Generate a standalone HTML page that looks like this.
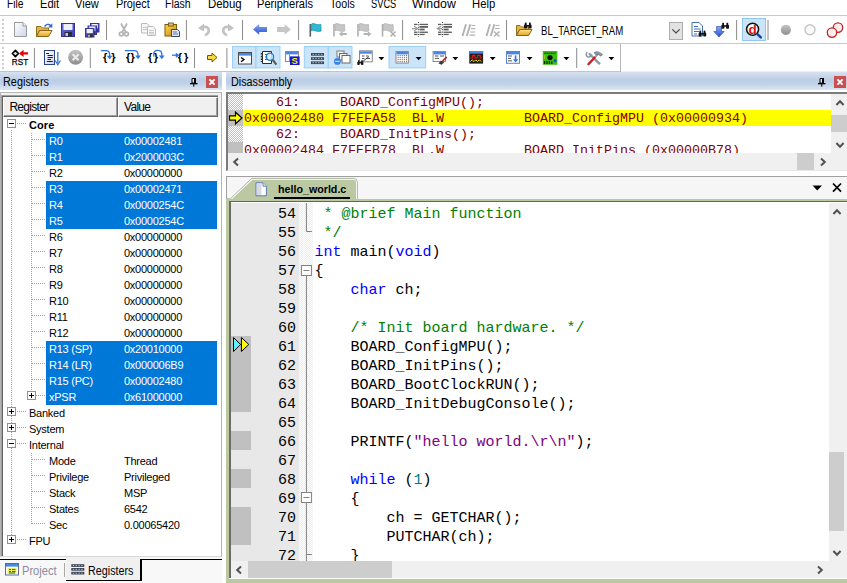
<!DOCTYPE html><html><head><meta charset="utf-8"><title>uVision</title><style>
*{box-sizing:border-box;margin:0;padding:0}
html,body{width:847px;height:583px;overflow:hidden;background:#f0f0f0}
body{position:relative;font-family:"Liberation Sans",sans-serif;font-size:12px;color:#000}
.a{position:absolute}
.t{position:absolute;white-space:pre;line-height:1}
#menubar{left:0;top:0;width:847px;height:15px;background:#fff}
.mi{font-size:12.5px;top:-3px;}
#tb1{left:0;top:16px;width:847px;height:27px;background:#fff}
#tb2{left:0;top:44px;width:847px;height:27px;background:#fff}
.hl{background:#c8c8c8;height:1px;left:0;width:847px}
.grip{width:3px;background:repeating-linear-gradient(#b4b4b4 0 1px,transparent 1px 3px);left:2px}
.sep{width:1px;background:#8d8d8d;height:20px}
.phead{height:18px;top:72px;background:linear-gradient(#d6e1f0 0%,#bccde4 45%,#c4d4e8 70%,#dbe6f3 100%)}
.phead .t{font-size:12px;top:3px;left:3px}
.xbtn{width:12px;height:12px;background:#c75050;top:76px}
.mono{font-family:"Liberation Mono",monospace}
.row{position:absolute;left:3px;width:214px;height:16px;font-size:11px;letter-spacing:-0.25px}
.row .t{top:2.6px}
.sel{position:absolute;left:43px;top:0;width:171px;height:16px;background:#0078d7}
.row.s .t{color:#fff}
.dot-h{position:absolute;height:1px;background:repeating-linear-gradient(90deg,#a0a0a0 0 1px,transparent 1px 2px)}
.dot-v{position:absolute;width:1px;background:repeating-linear-gradient(#a0a0a0 0 1px,transparent 1px 2px)}
.box{position:absolute;width:9px;height:9px;border:1px solid #919191;background:#fff}
.box i{position:absolute;left:1px;top:3px;width:5px;height:1px;background:#000}
.box b{position:absolute;left:3px;top:1px;width:1px;height:5px;background:#000}
.dis{font-size:12px;color:#800000;transform-origin:0 0;transform:scaleX(1.1111)}
.code{font-size:15px;}
.ln{font-size:15px;color:#000}
.cm{color:#008000}.kw{color:#0000ff}.st{color:#800080}.nm{color:#008080}
.chk{background-image:conic-gradient(#c0c0c0 25%,#fff 0 50%,#c0c0c0 0 75%,#fff 0);background-size:2px 2px}
.sb{background:#f0f0f0}
.thumb{background:#cdcdcd}
.arr{font-family:"DejaVu Sans",sans-serif;color:#606060}
</style></head><body>
<div id="menubar" class="a">
<span class="t" style="left:7.3px;top:-2.3px;font-size:12px;transform-origin:0 0;transform:scaleX(0.8530);">File</span>
<span class="t" style="left:40.3px;top:-2.3px;font-size:12px;transform-origin:0 0;transform:scaleX(0.9281);">Edit</span>
<span class="t" style="left:75.4px;top:-2.3px;font-size:12px;transform-origin:0 0;transform:scaleX(0.9226);">View</span>
<span class="t" style="left:115.7px;top:-2.3px;font-size:12px;transform-origin:0 0;transform:scaleX(0.9020);">Project</span>
<span class="t" style="left:165.3px;top:-2.3px;font-size:12px;transform-origin:0 0;transform:scaleX(0.8758);">Flash</span>
<span class="t" style="left:207.6px;top:-2.3px;font-size:12px;transform-origin:0 0;transform:scaleX(0.9527);">Debug</span>
<span class="t" style="left:257px;top:-2.3px;font-size:12px;transform-origin:0 0;transform:scaleX(0.9225);">Peripherals</span>
<span class="t" style="left:329.5px;top:-2.3px;font-size:12px;transform-origin:0 0;transform:scaleX(0.8852);">Tools</span>
<span class="t" style="left:371px;top:-2.3px;font-size:12px;transform-origin:0 0;transform:scaleX(0.7740);">SVCS</span>
<span class="t" style="left:412px;top:-2.3px;font-size:12px;transform-origin:0 0;transform:scaleX(1.0261);">Window</span>
<span class="t" style="left:471.6px;top:-2.3px;font-size:12px;transform-origin:0 0;transform:scaleX(0.9397);">Help</span>
</div>
<div class="a hl" style="top:15px"></div>
<div id="tb1" class="a"><!--TB1--></div>
<div class="a hl" style="top:43px"></div>
<div id="tb2" class="a"><!--TB2--></div>
<div class="a hl" style="top:71px;background:#c4c4c4;width:621px"></div>
<div class="a" style="left:620px;top:44px;width:1px;height:28px;background:#b4b4b4"></div>
<svg class="a" style="left:0;top:16px" width="847" height="56" viewBox="0 16 847 56">
<defs>
<linearGradient id="gpage" x1="0" y1="0" x2="1" y2="1"><stop offset="0" stop-color="#ffffff"/><stop offset="1" stop-color="#cfd4ee"/></linearGradient>
<linearGradient id="gfold" x1="0" y1="0" x2="0" y2="1"><stop offset="0" stop-color="#ffe58a"/><stop offset="1" stop-color="#e3a428"/></linearGradient>
<linearGradient id="gblue" x1="0" y1="0" x2="0" y2="1"><stop offset="0" stop-color="#86a8f4"/><stop offset="1" stop-color="#2c50cc"/></linearGradient>
<linearGradient id="ggrey" x1="0" y1="0" x2="0" y2="1"><stop offset="0" stop-color="#c4c4c4"/><stop offset="1" stop-color="#8e8e8e"/></linearGradient>
<linearGradient id="gflop" x1="0" y1="0" x2="1" y2="1"><stop offset="0" stop-color="#6c6cd8"/><stop offset="1" stop-color="#4040a8"/></linearGradient>
<linearGradient id="gclip" x1="0" y1="0" x2="1" y2="1"><stop offset="0" stop-color="#ffd850"/><stop offset="1" stop-color="#c88c10"/></linearGradient>
</defs>
<rect x="2.2" y="19.2" width="1.6" height="1.6" fill="#b4b4b4"/>
<rect x="2.2" y="23.2" width="1.6" height="1.6" fill="#b4b4b4"/>
<rect x="2.2" y="27.2" width="1.6" height="1.6" fill="#b4b4b4"/>
<rect x="2.2" y="31.2" width="1.6" height="1.6" fill="#b4b4b4"/>
<rect x="2.2" y="35.2" width="1.6" height="1.6" fill="#b4b4b4"/>
<rect x="2.2" y="39.2" width="1.6" height="1.6" fill="#b4b4b4"/>
<rect x="2.2" y="47.2" width="1.6" height="1.6" fill="#b4b4b4"/>
<rect x="2.2" y="51.2" width="1.6" height="1.6" fill="#b4b4b4"/>
<rect x="2.2" y="55.2" width="1.6" height="1.6" fill="#b4b4b4"/>
<rect x="2.2" y="59.2" width="1.6" height="1.6" fill="#b4b4b4"/>
<rect x="2.2" y="63.2" width="1.6" height="1.6" fill="#b4b4b4"/>
<rect x="2.2" y="67.2" width="1.6" height="1.6" fill="#b4b4b4"/>
<rect x="106.0" y="20" width="1" height="20" fill="#8c8c8c"/>
<rect x="185.9" y="20" width="1" height="20" fill="#8c8c8c"/>
<rect x="242.0" y="20" width="1" height="20" fill="#8c8c8c"/>
<rect x="298.1" y="20" width="1" height="20" fill="#8c8c8c"/>
<rect x="402.1" y="20" width="1" height="20" fill="#8c8c8c"/>
<rect x="506.0" y="20" width="1" height="20" fill="#8c8c8c"/>
<rect x="736.1" y="20" width="1" height="20" fill="#8c8c8c"/>
<rect x="767.5" y="20" width="1" height="20" fill="#8c8c8c"/>
<rect x="33.9" y="48" width="1" height="20" fill="#8c8c8c"/>
<rect x="89.8" y="48" width="1" height="20" fill="#8c8c8c"/>
<rect x="194.0" y="48" width="1" height="20" fill="#8c8c8c"/>
<rect x="226.4" y="48" width="1" height="20" fill="#8c8c8c"/>
<rect x="576.2" y="48" width="1" height="20" fill="#8c8c8c"/>
<path d="M14.5 22.5H23L26.5 26V36.5H14.5Z" fill="url(#gpage)" stroke="#9a9a9a"/><path d="M23 22.5V26H26.5" fill="#f4f4fa" stroke="#9a9a9a"/>
<path d="M36.5 36.5V26.5H41L42.5 28H48.5V30.5H39.5L36.5 36.5Z" fill="#e6b347" stroke="#94701c"/><path d="M36.5 36.5L39.7 30.5H52L48.6 36.5Z" fill="url(#gfold)" stroke="#8a661a"/>
<path d="M44.5 26.5Q47.5 22.5 51 26" fill="none" stroke="#3566cc" stroke-width="1.5"/><path d="M52.3 23.2V27.6H48Z" fill="#3566cc"/>
<rect x="61.5" y="23.5" width="13" height="13" fill="url(#gflop)" stroke="#34349a"/>
<rect x="63.5" y="24" width="9.0" height="6.0" fill="#eef0fc"/>
<rect x="64.5" y="32.0" width="7.5" height="4.5" fill="#2c2c38"/>
<rect x="65.5" y="33.0" width="2.5" height="3.0" fill="#c8c8d4"/>
<rect x="90.5" y="23.5" width="8.5" height="8.5" fill="url(#gflop)" stroke="#34349a"/>
<rect x="91.7" y="24" width="6.1" height="4.1" fill="#eef0fc"/>
<rect x="92.4" y="29.1" width="5.1" height="3.1" fill="#2c2c38"/>
<rect x="93.1" y="29.8" width="1.7" height="2.0" fill="#c8c8d4"/>
<rect x="88.0" y="26.0" width="8.5" height="8.5" fill="url(#gflop)" stroke="#34349a"/>
<rect x="89.2" y="26.5" width="6.1" height="4.1" fill="#eef0fc"/>
<rect x="89.9" y="31.6" width="5.1" height="3.1" fill="#2c2c38"/>
<rect x="90.6" y="32.3" width="1.7" height="2.0" fill="#c8c8d4"/>
<rect x="85.5" y="28.5" width="8.5" height="8.5" fill="url(#gflop)" stroke="#34349a"/>
<rect x="86.7" y="29" width="6.1" height="4.1" fill="#eef0fc"/>
<rect x="87.4" y="34.1" width="5.1" height="3.1" fill="#2c2c38"/>
<rect x="88.1" y="34.8" width="1.7" height="2.0" fill="#c8c8d4"/>
<g stroke="#b4b4b4" fill="none" stroke-width="1.7"><path d="M121 23.5L126 32.5M127 23.5L122 32.5"/><circle cx="121.3" cy="34" r="1.9"/><circle cx="126.5" cy="34" r="1.9"/></g>
<g stroke="#bcbcbc" fill="#f6f6f6"><path d="M141.5 23.5H147L149.5 26V33H141.5Z"/><path d="M147.5 26.5H153L155.5 29V35.5H147.5Z"/></g><g stroke="#c8c8c8"><path d="M143 27.5H148M143 29.5H147M149 30.5H154M149 32.5H154M149 34H154" fill="none"/></g>
<rect x="165" y="24.5" width="11.5" height="11.5" fill="url(#gclip)" stroke="#7c5c0c"/><rect x="168.3" y="23" width="5" height="3" fill="#d8c070" stroke="#5c4c14" stroke-width=".8"/>
<path d="M171.5 29.5H177.5L179.5 31.5V36.5H171.5Z" fill="#dfe6f4" stroke="#34466a"/><path d="M173 32H177M173 34H178" stroke="#5a78aa" fill="none"/>
<g fill="none" stroke="#c2c2c2" stroke-width="2.6"><path d="M205 35.2C210.5 33 210 25.8 203 27"/><path d="M227 35.2C221.5 33 222 25.8 229 27"/></g>
<path d="M198 28.2L204 23.6V31.6Z" fill="#c2c2c2"/><path d="M234 28.2L228 23.6V31.6Z" fill="#c2c2c2"/>
<path d="M253 29.4L259.2 24V27H267V32H259.2V34.8Z" fill="url(#gblue)"/>
<path d="M290.8 29.4L284.6 24V27H277V32H284.6V34.8Z" fill="#c6c6c6"/>
<path d="M310.3 24V36.6" stroke="#5a5a5a" stroke-width="1.6"/>
<path d="M311.3 24.2C313.8 22.2 316.3 25.8 320.8 24.4L321.1 31C316.3 32.6 313.8 28.8 311.3 30.8Z" fill="#2fbad2" stroke="#1794ae" stroke-width=".8"/>
<path d="M334 24V36.6" stroke="#b0b0b0" stroke-width="1.6"/>
<path d="M335 24.2C337.5 22.2 340 25.8 344.5 24.4L344.8 31C340 32.6 337.5 28.8 335 30.8Z" fill="#c6c6c6" stroke="#b4b4b4" stroke-width=".8"/>
<path d="M358 24V36.6" stroke="#b0b0b0" stroke-width="1.6"/>
<path d="M359 24.2C361.5 22.2 364 25.8 368.5 24.4L368.8 31C364 32.6 361.5 28.8 359 30.8Z" fill="#c6c6c6" stroke="#b4b4b4" stroke-width=".8"/>
<path d="M382.5 24V36.6" stroke="#b0b0b0" stroke-width="1.6"/>
<path d="M383.5 24.2C386.0 22.2 388.5 25.8 393.0 24.4L393.3 31C388.5 32.6 386.0 28.8 383.5 30.8Z" fill="#c6c6c6" stroke="#b4b4b4" stroke-width=".8"/>
<path d="M339 34L342.5 31.2V33H346.8V35H342.5V36.8Z" fill="#b4b4b4"/>
<path d="M371.4 34L367.9 31.2V33H363.6V35H367.9V36.8Z" fill="#b4b4b4"/>
<path d="M390.5 31.5L395.5 36.5M395.5 31.5L390.5 36.5" stroke="#b0b0b0" stroke-width="1.5"/>
<g fill="#5e5e5e"><rect x="419.5" y="23.8" width="8.5" height="1.3"/><rect x="419.5" y="26" width="8.5" height="1.8"/><rect x="419.5" y="28.6" width="5.2" height="1.8"/><rect x="419.5" y="31.6" width="8.5" height="1.3"/><rect x="419.5" y="33.8" width="5.2" height="1.3"/>
<rect x="414" y="23.8" width="3.5" height="1.3"/><rect x="414" y="31.6" width="3.5" height="1.3"/><rect x="414" y="33.8" width="3.5" height="1.3"/></g>
<path d="M418.5 22V37" stroke="#4a4a4a" stroke-width="1" stroke-dasharray="1 1.4"/>
<path d="M414 26.2L417.8 28.6L414 31M412 28.6H417.5" stroke="#9a9a9a" fill="none" stroke-width="1.1"/>
<g fill="#5e5e5e"><rect x="443.5" y="23.8" width="8.5" height="1.3"/><rect x="443.5" y="26" width="8.5" height="1.8"/><rect x="443.5" y="28.6" width="5.2" height="1.8"/><rect x="443.5" y="31.6" width="8.5" height="1.3"/><rect x="443.5" y="33.8" width="5.2" height="1.3"/>
<rect x="438" y="23.8" width="3.5" height="1.3"/><rect x="438" y="31.6" width="3.5" height="1.3"/><rect x="438" y="33.8" width="3.5" height="1.3"/></g>
<path d="M442.5 22V37" stroke="#4a4a4a" stroke-width="1" stroke-dasharray="1 1.4"/>
<path d="M441 26.2L437.2 28.6L441 31M437.5 28.6H442" stroke="#9a9a9a" fill="none" stroke-width="1.1"/>
<g stroke="#b2b2b2" fill="none"><path d="M462.5 36L466 24.2M466.8 36L470.3 24.2" stroke-width="1.9"/>
<path d="M471.5 25.5H475.3M471 28.7H475.3M470.2 32H475.3M469.5 35.2H475.3" stroke-width="1.2"/></g>
<g stroke="#b2b2b2" fill="none"><path d="M486.5 36L490 24.2M490.8 36L494.3 24.2" stroke-width="1.9"/>
<path d="M495.5 25.5H499.5M495 28.5H499.5" stroke-width="1.2"/><path d="M494 31.5L499.5 36.5M499.5 31.5L494 36.5" stroke-width="1.6"/></g>
<path d="M516.5 35.5V25.5H520L521.5 27H528.5V29.5H519.5Z" fill="#e6b347" stroke="#94701c"/><path d="M516.5 35.5L519.7 29.5H532L528.6 35.5Z" fill="url(#gfold)" stroke="#8a661a"/>
<g fill="#141414"><rect x="524" y="24.6" width="3.0" height="4.0" rx=".8"/><rect x="528.6" y="24.6" width="3.0" height="4.0" rx=".8"/><rect x="524.8" y="22.6" width="1.8" height="3.0"/><rect x="529.0" y="22.6" width="1.8" height="3.0"/><rect x="526.5" y="25.0" width="2.6" height="1.6"/></g>
<rect x="669.5" y="22.5" width="13" height="17" fill="#e2e2e2" stroke="#adadad"/><path d="M672.3 29.3L676 33L679.7 29.3" fill="none" stroke="#444" stroke-width="1.2"/>
<path d="M692 22.5H699L702.5 26V36H692Z" fill="#fff" stroke="#4a6fa8"/><path d="M694 26.5H698M694 29H700.5M694 31.5H699M694 34H697" stroke="#3b6fd0" fill="none" stroke-width="1.1"/>
<g fill="#141414"><rect x="698.6" y="32.6" width="3.0" height="4.0" rx=".8"/><rect x="703.2" y="32.6" width="3.0" height="4.0" rx=".8"/><rect x="699.4" y="30.6" width="1.8" height="3.0"/><rect x="703.6" y="30.6" width="1.8" height="3.0"/><rect x="701.1" y="33.0" width="2.6" height="1.6"/></g>
<path d="M716.5 26.5H721.5V31.5H724.2L719 37L713.8 31.5H716.5Z" fill="url(#gblue)" stroke="#2444b0" stroke-width=".6"/>
<g fill="#141414"><rect x="721.4" y="24.8" width="3.0" height="4.0" rx=".8"/><rect x="726.0" y="24.8" width="3.0" height="4.0" rx=".8"/><rect x="722.1999999999999" y="22.8" width="1.8" height="3.0"/><rect x="726.4" y="22.8" width="1.8" height="3.0"/><rect x="723.9" y="25.2" width="2.6" height="1.6"/></g>
<rect x="742.5" y="18.5" width="23" height="22" fill="#cce4f7" stroke="#8fc6f2"/>
<circle cx="752.6" cy="29.2" r="6" fill="#fff" stroke="#101010" stroke-width="1.5"/><path d="M757.4 34.2L760.8 37.4" stroke="#1c3aa8" stroke-width="2.4" stroke-linecap="round"/>
<text x="748.4" y="34" font-family="Liberation Sans,sans-serif" font-weight="bold" font-size="13.5" fill="#e01010">d</text>
<circle cx="785.9" cy="29.8" r="5.1" fill="url(#ggrey)"/>
<circle cx="810" cy="29.8" r="5" fill="#fafafa" stroke="#c4c4c4" stroke-width="1.4"/>
<circle cx="838" cy="27.6" r="4.7" fill="#fbeeee" stroke="#c82020" stroke-width="1.3"/><circle cx="832" cy="32.6" r="4.7" fill="#fbeeee" stroke="#c82020" stroke-width="1.3"/>
<path d="M15.4 50.4L18.4 53.5L15.4 56.6L12.4 53.5Z" fill="#ddd" stroke="#000" stroke-width="1.7" stroke-linejoin="round"/><path d="M19 53.4L23.6 49.8V52.2H28V54.6H23.6V57Z" fill="#e80000"/>
<text x="11.8" y="64.7" font-family="Liberation Sans,sans-serif" font-size="9.4" textLength="16.4" lengthAdjust="spacingAndGlyphs" fill="#000" stroke="#000" stroke-width=".25">RST</text>
<rect x="44.5" y="50.5" width="10" height="14" fill="url(#gpage)" stroke="#2c4480"/><path d="M46.1 53.5H49M47.5 55.5H52.8M47.5 57.5H52.8M47.5 59.5H51M46.8 61.5H52.8" stroke="#141c38" fill="none" stroke-width="1"/>
<path d="M57.8 52V63" stroke="#2f74e4" stroke-width="1.3"/><path d="M55.2 60.5L57.8 64.8L60.4 60.5" fill="none" stroke="#2f74e4" stroke-width="1.2"/>
<circle cx="75.6" cy="57.2" r="7.5" fill="url(#ggrey)"/><path d="M72.6 54.2L78.6 60.2M78.6 54.2L72.6 60.2" stroke="#ececec" stroke-width="2"/>
<text x="102.89999999999999" y="61.3" font-family="Liberation Sans,sans-serif" font-weight="bold" font-size="11" fill="#000">{</text><text x="111.3" y="61.3" font-family="Liberation Sans,sans-serif" font-weight="bold" font-size="11" fill="#000">}</text>
<path d="M100.8 50.6H106Q109.6 50.6 109.6 54.2V57" fill="none" stroke="#2f74e4" stroke-width="1.3"/><path d="M106.8 55.8H112.4L109.6 59.6Z" fill="#2f74e4"/>
<text x="125.89999999999999" y="61.3" font-family="Liberation Sans,sans-serif" font-weight="bold" font-size="11" fill="#000">{</text><text x="130.5" y="61.3" font-family="Liberation Sans,sans-serif" font-weight="bold" font-size="11" fill="#000">}</text>
<path d="M124.8 50.6H134Q138 50.6 138 54.4V56" fill="none" stroke="#2f74e4" stroke-width="1.3"/><path d="M135.2 55.4H140.8L138 59.2Z" fill="#2f74e4"/>
<text x="148.10000000000002" y="61.3" font-family="Liberation Sans,sans-serif" font-weight="bold" font-size="11" fill="#000">{</text><text x="153.70000000000002" y="61.3" font-family="Liberation Sans,sans-serif" font-weight="bold" font-size="11" fill="#000">}</text>
<path d="M153.8 56.5V53.6Q153.8 50.4 157.8 50.4Q161.8 50.4 161.8 54V56" fill="none" stroke="#2f74e4" stroke-width="1.3"/><path d="M159 55.4H164.6L161.8 59.2Z" fill="#2f74e4"/>
<text x="177.70000000000002" y="61.3" font-family="Liberation Sans,sans-serif" font-weight="bold" font-size="11" fill="#000">{</text><text x="183.9" y="61.3" font-family="Liberation Sans,sans-serif" font-weight="bold" font-size="11" fill="#000">}</text>
<path d="M172 55.2H178" stroke="#2f74e4" stroke-width="1.3"/><path d="M175.8 52.4L179.4 55.2L175.8 58Z" fill="#2f74e4"/>
<path d="M207.5 55.5H212V53L217 57.5L212 62V59.5H207.5Z" fill="#f6d840" stroke="#6e5600" stroke-width="1"/>
<rect x="232.5" y="46.5" width="23.5" height="21.5" fill="#cce4f7" stroke="#9bcff8"/>
<rect x="256" y="46.5" width="24" height="21.5" fill="#cce4f7" stroke="#9bcff8"/>
<rect x="304.3" y="46.5" width="24" height="21.5" fill="#cce4f7" stroke="#9bcff8"/>
<rect x="328.3" y="46.5" width="23.7" height="21.5" fill="#cce4f7" stroke="#9bcff8"/>
<rect x="389" y="46.5" width="36.7" height="21.5" fill="#cce4f7" stroke="#9bcff8"/>
<rect x="238.5" y="52.5" width="13" height="11.5" fill="#fff" stroke="#4a4a4a"/><rect x="239" y="53" width="12" height="2.6" fill="#4a86e4"/><path d="M241 57.4L244 59.6L241 61.8" fill="none" stroke="#000" stroke-width="1.3"/>
<path d="M262.5 51.5H271.5V63.5H262.5Z" fill="#fff" stroke="#2c2c2c"/><path d="M261.5 53V62" stroke="#2c2c2c" stroke-dasharray="1.5 1.2" stroke-width="1.4"/><path d="M265 54.5H269M265 57H268M265 59.5H269" stroke="#555" fill="none"/>
<circle cx="270" cy="56.8" r="3.6" fill="#d4ecff" fill-opacity=".85" stroke="#1c7cd0" stroke-width="1.3"/><path d="M272.6 59.8L276.4 64.6" stroke="#5a5a5a" stroke-width="2.2"/>
<rect x="285.5" y="51.5" width="13" height="10" fill="#fff" stroke="#8a8a8a"/><rect x="286" y="52" width="12" height="2.4" fill="#4a86e4"/><path d="M289.5 54.5V61.5" stroke="#8a8a8a"/>
<rect x="290" y="56.4" width="9.6" height="8.6" fill="#1414d4"/><text x="291.6" y="64.2" font-family="Liberation Sans,sans-serif" font-weight="bold" font-size="9.5" fill="#f4f000">S</text>
<rect x="311" y="53" width="13" height="2.7" fill="#3c444e"/><path d="M312.5 54.35H322.5" stroke="#b8c4d4" stroke-width="1" stroke-dasharray="1.4 1.4"/>
<rect x="311" y="57.2" width="13" height="2.7" fill="#3c444e"/><path d="M312.5 58.550000000000004H322.5" stroke="#b8c4d4" stroke-width="1" stroke-dasharray="1.4 1.4"/>
<rect x="311" y="61.4" width="13" height="2.7" fill="#3c444e"/><path d="M312.5 62.75H322.5" stroke="#b8c4d4" stroke-width="1" stroke-dasharray="1.4 1.4"/>
<rect x="337" y="51" width="7" height="6" fill="#f4f4f4" stroke="#7a7a7a"/><rect x="339.5" y="53.5" width="7.5" height="6.5" fill="#f4f4f4" stroke="#6a6a6a"/><rect x="342" y="55.5" width="8" height="7.5" fill="#fdfdfd" stroke="#6a6a6a"/><circle cx="337.4" cy="61.4" r="3.4" fill="#3c84e4"/><path d="M335.2 61.4H339.6" stroke="#d4e8ff"/>
<path d="M378.5 57H384.29999999999995L381.4 60.2Z" fill="#000"/>
<path d="M415.70000000000005 57H421.5L418.6 60.2Z" fill="#000"/>
<path d="M452.40000000000003 57H458.2L455.3 60.2Z" fill="#000"/>
<path d="M489.8 57H495.59999999999997L492.7 60.2Z" fill="#000"/>
<path d="M526.7 57H532.5L529.6 60.2Z" fill="#000"/>
<path d="M563.5 57H569.3L566.4 60.2Z" fill="#000"/>
<path d="M608.5 57H614.3L611.4 60.2Z" fill="#000"/>
<rect x="359.5" y="50.8" width="12.8" height="11" fill="#fff" stroke="#8a8a8a"/><rect x="360" y="51.3" width="11.8" height="2.4" fill="#4a86e4"/>
<path d="M362 56H364.5M366 56H368.5M362 58.5H364.5M366 58.5H370" stroke="#555" fill="none"/>
<g fill="#141414"><rect x="357.3" y="61.800000000000004" width="2.4000000000000004" height="3.2" rx=".8"/><rect x="360.98" y="61.800000000000004" width="2.4000000000000004" height="3.2" rx=".8"/><rect x="357.94" y="60.2" width="1.4400000000000002" height="2.4000000000000004"/><rect x="361.3" y="60.2" width="1.4400000000000002" height="2.4000000000000004"/><rect x="359.3" y="62.120000000000005" width="2.08" height="1.2800000000000002"/></g>
<path d="M362 62L369 56.5" stroke="#333" stroke-width=".9"/>
<rect x="396.0" y="51.5" width="12.4" height="11.6" fill="#fff" stroke="#8a8a8a"/><rect x="396.5" y="52" width="11.4" height="2.4" fill="#4a86e4"/>
<g stroke="#505050" stroke-dasharray="1 1.1" stroke-width="1"><path d="M397.6 55.7H407.5M397.6 57.7H407.5M397.6 59.7H407.5M397.6 61.7H407.5"/></g>
<rect x="433.1" y="51.5" width="12.4" height="10" fill="#fff" stroke="#8a8a8a"/><rect x="433.6" y="52" width="11.4" height="2.4" fill="#4a86e4"/>
<path d="M435 56H438.5M440 56H444M435 58.4H439" stroke="#555" fill="none"/><path d="M438.5 63.6L441 60.4L444.2 62.6L441.5 64.8Z" fill="#3a3a3a"/><path d="M442.6 61L446.8 57" stroke="#b01818" stroke-width="1.7"/>
<rect x="469.3" y="51" width="13.8" height="12.6" fill="#1c1c1c"/><rect x="469.3" y="51" width="13.8" height="2.6" fill="#4a86e4"/><path d="M470.4 58H472.4V55.4H475V58H477.6V55.4H480.2V58H482" fill="none" stroke="#f01010" stroke-width="1.2"/><path d="M470.4 61.6L472.2 59.8L474 61.6L475.8 59.8L477.6 61.6L479.4 59.8L481.2 61.6" fill="none" stroke="#f4e800" stroke-width="1"/>
<rect x="506.5" y="51.5" width="13" height="11.8" fill="#fff" stroke="#5c84cc"/><rect x="507" y="52" width="12" height="2.4" fill="#4a86e4"/>
<path d="M508 56H512M508 58.4H511M508 60.8H512" stroke="#555" fill="none"/><path d="M515.6 55.4V60" stroke="#2f74e4" stroke-width="1.6"/><path d="M513 59.2H518.2L515.6 62.4Z" fill="#2f74e4"/>
<rect x="542.8" y="51" width="14.6" height="13.8" fill="#3cc00c"/><path d="M544.5 53.2H555.5" stroke="#1c3c14" stroke-width="1.4" stroke-dasharray="1.2 .8"/><circle cx="550" cy="57.6" r="2.6" fill="#0c0c0c"/><path d="M555 58.8L557 60.8L555 62.8L553 60.8Z" fill="#1c50e0"/><path d="M544.6 61V64M547 61V64M549.4 61V64M551.8 61.6V64" stroke="#143010" stroke-width="1.3"/><path d="M544.4 55.4V59.5" stroke="#e8e020" stroke-width="1.2" stroke-dasharray="1 1"/>
<path d="M589 53.4L597 61.4" stroke="#8c98a8" stroke-width="2.2"/><path d="M587.4 52.2A2.6 2.6 0 1 0 591.4 54.6" fill="none" stroke="#8c98a8" stroke-width="1.6"/><path d="M596.2 60.6L600 64.2" stroke="#8c98a8" stroke-width="2.4"/>
<path d="M588.4 64.2L595 57.2" stroke="#d01c1c" stroke-width="2.4" stroke-linecap="round"/><path d="M595 57.2L598.4 53.6" stroke="#9a9a9a" stroke-width="1.8"/><path d="M594 52.6Q598 50 602.6 54.6L601 56.2Q598.4 53.8 595.6 54.6Z" fill="#8c98a8" stroke="#5c6878" stroke-width=".6"/>
</svg>
<span class="t" style="left:541.3px;top:25.1px;font-size:12.5px;transform-origin:0 0;transform:scaleX(0.7700);">BL_TARGET_RAM</span>
<div class="a phead" style="left:0;width:222px"><span class="t" style="left:2.5px;top:4.4px;font-size:12px;transform-origin:0 0;transform:scaleX(0.9075);">Registers</span></div>
<svg class="a" style="left:206px;top:76px" width="12" height="12"><rect width="12" height="12" fill="#c85050"/><path d="M3.4 3.4L8.6 8.6M8.6 3.4L3.4 8.6" stroke="#fff" stroke-width="1.9"/></svg><svg class="a" style="left:190px;top:77px" width="8" height="10"><path d="M2 1.5H5.5V6H2Z" fill="#dfe7f3" stroke="#000" stroke-width="1"/><rect x="4" y="1" width="2" height="5.5" fill="#000"/><rect x="0" y="6" width="7.5" height="1.3" fill="#000"/><rect x="3.2" y="7" width="1.1" height="2.6" fill="#000"/></svg>
<div class="a" style="left:222px;top:72px;width:4px;height:511px;background:#fff"></div>
<div class="a phead" style="left:226px;width:621px"><span class="t" style="left:4.6px;top:4.4px;font-size:12px;transform-origin:0 0;transform:scaleX(0.8998);">Disassembly</span></div>
<svg class="a" style="left:834px;top:76px" width="12" height="12"><rect width="12" height="12" fill="#c85050"/><path d="M3.4 3.4L8.6 8.6M8.6 3.4L3.4 8.6" stroke="#fff" stroke-width="1.9"/></svg><svg class="a" style="left:818px;top:77px" width="8" height="10"><path d="M2 1.5H5.5V6H2Z" fill="#dfe7f3" stroke="#000" stroke-width="1"/><rect x="4" y="1" width="2" height="5.5" fill="#000"/><rect x="0" y="6" width="7.5" height="1.3" fill="#000"/><rect x="3.2" y="7" width="1.1" height="2.6" fill="#000"/></svg>
<div class="a" style="left:0;top:90px;width:222px;height:493px;background:#fff"></div>
<div class="a" style="left:0;top:92px;width:222px;height:465px;border:1px solid #b4b4b4;border-bottom-color:#d8d8d8;background:#fff"></div>
<div class="a" style="left:1px;top:93px;width:220px;height:24px;background:#f0f0f0"></div>
<div class="a" style="left:1px;top:95px;width:217px;height:461px;border-left:1px solid #a0a0a0;border-top:1px solid #a0a0a0;background:#fff"></div>
<div class="a" style="left:2px;top:96px;width:216px;height:460px;border-left:1px solid #646464;border-top:1px solid #646464;background:#fff"></div>
<div style="position:absolute;top:97px;height:20px;background:#f0f0f0;border-top:1px solid #fff;border-left:1px solid #fff;border-right:1px solid #696969;border-bottom:1px solid #696969;box-shadow:inset -1px -1px 0 #a0a0a0;left:3px;width:115px"><span class="t" style="left:5.4px;top:3.4px;font-size:12px;letter-spacing:-.7px">Register</span></div>
<div style="position:absolute;top:97px;height:20px;background:#f0f0f0;border-top:1px solid #fff;border-left:1px solid #fff;border-right:1px solid #696969;border-bottom:1px solid #696969;box-shadow:inset -1px -1px 0 #a0a0a0;left:118px;width:100px"><span class="t" style="left:5px;top:3.4px;font-size:12px;letter-spacing:-.7px">Value</span></div>
<div class="dot-v" style="left:11px;top:130px;height:410px"></div>
<div class="dot-v" style="left:31px;top:133px;height:264px"></div>
<div class="dot-v" style="left:31px;top:453px;height:72px"></div>
<div class="row" style="top:117px">
<div class="dot-h" style="left:14px;top:6px;width:10px"></div>
<div class="box" style="left:4px;top:2px"><i></i></div>
<span class="t" style="left:26px;font-weight:bold;letter-spacing:.1px;">Core</span>
</div>
<div class="row s" style="top:133px">
<div class="sel"></div>
<div class="dot-h" style="left:29px;top:6px;width:13px"></div>
<span class="t" style="left:46px">R0</span>
<span class="t" style="left:121px">0x00002481</span>
</div>
<div class="row s" style="top:149px">
<div class="sel"></div>
<div class="dot-h" style="left:29px;top:6px;width:13px"></div>
<span class="t" style="left:46px">R1</span>
<span class="t" style="left:121px">0x2000003C</span>
</div>
<div class="row" style="top:165px">
<div class="dot-h" style="left:29px;top:6px;width:13px"></div>
<span class="t" style="left:46px">R2</span>
<span class="t" style="left:121px">0x00000000</span>
</div>
<div class="row s" style="top:181px">
<div class="sel"></div>
<div class="dot-h" style="left:29px;top:6px;width:13px"></div>
<span class="t" style="left:46px">R3</span>
<span class="t" style="left:121px">0x00002471</span>
</div>
<div class="row s" style="top:197px">
<div class="sel"></div>
<div class="dot-h" style="left:29px;top:6px;width:13px"></div>
<span class="t" style="left:46px">R4</span>
<span class="t" style="left:121px">0x0000254C</span>
</div>
<div class="row s" style="top:213px">
<div class="sel"></div>
<div class="dot-h" style="left:29px;top:6px;width:13px"></div>
<span class="t" style="left:46px">R5</span>
<span class="t" style="left:121px">0x0000254C</span>
</div>
<div class="row" style="top:229px">
<div class="dot-h" style="left:29px;top:6px;width:13px"></div>
<span class="t" style="left:46px">R6</span>
<span class="t" style="left:121px">0x00000000</span>
</div>
<div class="row" style="top:245px">
<div class="dot-h" style="left:29px;top:6px;width:13px"></div>
<span class="t" style="left:46px">R7</span>
<span class="t" style="left:121px">0x00000000</span>
</div>
<div class="row" style="top:261px">
<div class="dot-h" style="left:29px;top:6px;width:13px"></div>
<span class="t" style="left:46px">R8</span>
<span class="t" style="left:121px">0x00000000</span>
</div>
<div class="row" style="top:277px">
<div class="dot-h" style="left:29px;top:6px;width:13px"></div>
<span class="t" style="left:46px">R9</span>
<span class="t" style="left:121px">0x00000000</span>
</div>
<div class="row" style="top:293px">
<div class="dot-h" style="left:29px;top:6px;width:13px"></div>
<span class="t" style="left:46px">R10</span>
<span class="t" style="left:121px">0x00000000</span>
</div>
<div class="row" style="top:309px">
<div class="dot-h" style="left:29px;top:6px;width:13px"></div>
<span class="t" style="left:46px">R11</span>
<span class="t" style="left:121px">0x00000000</span>
</div>
<div class="row" style="top:325px">
<div class="dot-h" style="left:29px;top:6px;width:13px"></div>
<span class="t" style="left:46px">R12</span>
<span class="t" style="left:121px">0x00000000</span>
</div>
<div class="row s" style="top:341px">
<div class="sel"></div>
<div class="dot-h" style="left:29px;top:6px;width:13px"></div>
<span class="t" style="left:46px">R13 (SP)</span>
<span class="t" style="left:121px">0x20010000</span>
</div>
<div class="row s" style="top:357px">
<div class="sel"></div>
<div class="dot-h" style="left:29px;top:6px;width:13px"></div>
<span class="t" style="left:46px">R14 (LR)</span>
<span class="t" style="left:121px">0x000006B9</span>
</div>
<div class="row s" style="top:373px">
<div class="sel"></div>
<div class="dot-h" style="left:29px;top:6px;width:13px"></div>
<span class="t" style="left:46px">R15 (PC)</span>
<span class="t" style="left:121px">0x00002480</span>
</div>
<div class="row s" style="top:389px">
<div class="sel"></div>
<div class="dot-h" style="left:29px;top:6px;width:13px"></div>
<div class="box" style="left:24px;top:2px"><i></i><b></b></div>
<span class="t" style="left:46px">xPSR</span>
<span class="t" style="left:121px">0x61000000</span>
</div>
<div class="row" style="top:405px">
<div class="dot-h" style="left:14px;top:6px;width:10px"></div>
<div class="box" style="left:4px;top:2px"><i></i><b></b></div>
<span class="t" style="left:26px;">Banked</span>
</div>
<div class="row" style="top:421px">
<div class="dot-h" style="left:14px;top:6px;width:10px"></div>
<div class="box" style="left:4px;top:2px"><i></i><b></b></div>
<span class="t" style="left:26px;">System</span>
</div>
<div class="row" style="top:437px">
<div class="dot-h" style="left:14px;top:6px;width:10px"></div>
<div class="box" style="left:4px;top:2px"><i></i></div>
<span class="t" style="left:26px;">Internal</span>
</div>
<div class="row" style="top:453px">
<div class="dot-h" style="left:29px;top:6px;width:13px"></div>
<span class="t" style="left:46px">Mode</span>
<span class="t" style="left:121px">Thread</span>
</div>
<div class="row" style="top:469px">
<div class="dot-h" style="left:29px;top:6px;width:13px"></div>
<span class="t" style="left:46px">Privilege</span>
<span class="t" style="left:121px">Privileged</span>
</div>
<div class="row" style="top:485px">
<div class="dot-h" style="left:29px;top:6px;width:13px"></div>
<span class="t" style="left:46px">Stack</span>
<span class="t" style="left:121px">MSP</span>
</div>
<div class="row" style="top:501px">
<div class="dot-h" style="left:29px;top:6px;width:13px"></div>
<span class="t" style="left:46px">States</span>
<span class="t" style="left:121px">6542</span>
</div>
<div class="row" style="top:517px">
<div class="dot-h" style="left:29px;top:6px;width:13px"></div>
<span class="t" style="left:46px">Sec</span>
<span class="t" style="left:121px">0.00065420</span>
</div>
<div class="row" style="top:533px">
<div class="dot-h" style="left:14px;top:6px;width:10px"></div>
<div class="box" style="left:4px;top:2px"><i></i><b></b></div>
<span class="t" style="left:26px;">FPU</span>
</div>
<div class="a" style="left:0;top:557px;width:222px;height:26px;background:#f8f8f8"></div>
<div class="a" style="left:66px;top:557px;width:75px;height:24px;background:#f0f0f0"></div>
<div class="a" style="left:0;top:559px;width:66px;height:1px;background:#000"></div>
<div class="a" style="left:141px;top:559px;width:81px;height:1px;background:#000"></div>
<div class="a" style="left:66px;top:580px;width:76px;height:1.4px;background:#000"></div>
<div class="a" style="left:140.4px;top:559px;width:1.4px;height:22.4px;background:#000"></div>
<div class="a" style="left:64px;top:563px;width:1px;height:14px;background:#a8a8a8"></div>
<svg class="a" style="left:5px;top:563px" width="14" height="13"><rect x=".5" y=".5" width="13" height="11.5" fill="#fff" stroke="#5a6a9a"/><rect x="1" y="1" width="12" height="2.6" fill="#4a86e4"/><rect x="2.5" y="5" width="9" height="6" fill="#e8f060"/><path d="M4 6.5H6M4 8.5H6M7 6.5H10.5M7 8.5H10.5M4 10H10" stroke="#4a6a1a" stroke-width="1"/></svg>
<svg class="a" style="left:70.5px;top:564px" width="14" height="11"><rect x=".3" y="0.2" width="13" height="2.7" fill="#3c4454"/><path d="M1.8 1.55H11.8" stroke="#b8c4d8" stroke-dasharray="1.4 1.4"/><rect x=".3" y="4" width="13" height="2.7" fill="#3c4454"/><path d="M1.8 5.35H11.8" stroke="#b8c4d8" stroke-dasharray="1.4 1.4"/><rect x=".3" y="7.8" width="13" height="2.7" fill="#3c4454"/><path d="M1.8 9.15H11.8" stroke="#b8c4d8" stroke-dasharray="1.4 1.4"/></svg>
<span class="t" style="left:22.1px;top:564.5px;font-size:12px;transform-origin:0 0;transform:scaleX(0.9261);color:#8c8ca0">Project</span>
<span class="t" style="left:87.7px;top:564.5px;font-size:12px;transform-origin:0 0;transform:scaleX(0.8977);">Registers</span>
<div class="a" style="left:226px;top:90px;width:621px;height:86px;background:#fff"></div>
<div class="a" style="left:226px;top:92px;width:621px;height:79px;background:#fff;border-left:2px solid #7c7c7c;border-top:2px solid #7c7c7c;border-bottom:1px solid #e8e8e8"></div>
<div class="a chk" style="left:228px;top:94px;width:15px;height:59px"></div>
<div class="a" style="left:228px;top:110px;width:15px;height:16px;background:#c0c0c0"></div>
<div class="a" style="left:228px;top:142px;width:15px;height:11px;background:#c0c0c0"></div>
<div class="a" style="left:243px;top:110px;width:588px;height:16px;background:#ffff00"></div>
<div class="a" style="left:243px;top:94px;width:588px;height:59px;overflow:hidden">
<span class="t mono dis" style="left:.5px;top:2.8px">    61:     BOARD_ConfigMPU(); </span>
<span class="t mono dis" style="left:.5px;top:18.8px">0x00002480 F7FEFA58  BL.W          BOARD_ConfigMPU (0x00000934)</span>
<span class="t mono dis" style="left:.5px;top:34.8px">    62:     BOARD_InitPins(); </span>
<span class="t mono dis" style="left:.5px;top:50.8px">0x00002484 F7FEFB78  BL.W          BOARD_InitPins (0x00000B78)</span>
</div>
<svg class="a" style="left:228px;top:110px" width="16" height="16"><path d="M1.5 5.8H7.5V2.2L14 8L7.5 13.8V10.2H1.5Z" fill="#ffff00" stroke="#000" stroke-width="1.2"/></svg>
<div class="a sb" style="left:831px;top:94px;width:16px;height:59px"></div>
<div class="a thumb" style="left:831px;top:115px;width:16px;height:17px"></div>
<div class="a sb" style="left:228px;top:153px;width:619px;height:17px"></div>
<div class="a thumb" style="left:797px;top:153px;width:17px;height:17px"></div>
<svg class="a" style="left:833.5px;top:97px" width="12" height="12" viewBox="-6 -6 12 12"><path d="M-3.6 2L0 -1.8L3.6 2" fill="none" stroke="#525252" stroke-width="2"/></svg><svg class="a" style="left:833.5px;top:139px" width="12" height="12" viewBox="-6 -6 12 12"><path d="M-3.6 -2L0 1.8L3.6 -2" fill="none" stroke="#525252" stroke-width="2"/></svg><svg class="a" style="left:230px;top:155.5px" width="12" height="12" viewBox="-6 -6 12 12"><path d="M2 -3.6L-1.8 0L2 3.6" fill="none" stroke="#525252" stroke-width="2"/></svg><svg class="a" style="left:817px;top:155.5px" width="12" height="12" viewBox="-6 -6 12 12"><path d="M-2 -3.6L1.8 0L-2 3.6" fill="none" stroke="#525252" stroke-width="2"/></svg>
<div class="a" style="left:226px;top:176px;width:621px;height:407px;background:#f6f6f6;border-top:1px solid #a0a0a0;border-left:1px solid #a0a0a0"></div>
<svg class="a" style="left:226px;top:176px" width="140" height="24"><path d="M1 23.5H4.6L26 3.2H127.5Q130.6 3.2 130.6 6.4V23.5Z" fill="#bac9a1" stroke="#fdfdfd" stroke-width="1.2"/><path d="M1 22.8H4.3L25.8 2.4H127.5Q131.4 2.4 131.4 6.4V23" fill="none" stroke="#9aa58a" stroke-width=".8"/></svg>
<div class="a" style="left:227px;top:199px;width:620px;height:3px;background:#bac9a1"></div>
<div class="a" style="left:226px;top:199px;width:3px;height:384px;background:#bac9a1"></div>
<div class="a" style="left:226px;top:579px;width:621px;height:4px;background:#bac9a1"></div>
<svg class="a" style="left:255px;top:181.5px" width="13" height="15"><path d="M1 .8H8L11.4 4.2V13.8H1Z" fill="#fff" stroke="#5c78b4" stroke-width="1"/><path d="M8 .8V4.2H11.4" fill="#e8eefa" stroke="#5c78b4" stroke-width=".9"/><rect x="1.8" y="1.6" width="4.6" height="11.4" fill="#cfcfd8" opacity=".8"/></svg>
<span class="t" style="left:277.7px;top:183.8px;font-size:11.5px;font-weight:bold;transform-origin:0 0;transform:scaleX(0.9293);">hello_world.c</span>
<div class="a" style="left:273.5px;top:197px;width:76.5px;height:2px;background:#000"></div>
<svg class="a" style="left:811px;top:182px" width="34" height="12"><path d="M1.5 3.5H11L6.25 8.6Z" fill="#000"/><path d="M22 1.5L30 9.6M30 1.5L22 9.6" stroke="#000" stroke-width="1.7"/></svg>
<div class="a" style="left:229px;top:201.4px;width:618px;height:377.6px;background:#fff;border-left:2px solid #6c6c6c;border-top:1.6px solid #62666c"></div>
<div class="a" style="left:231px;top:203px;width:68px;height:358px;background:#e8e8e8"></div>
<div class="a chk" style="left:299px;top:203px;width:14px;height:358px;opacity:.28"></div>
<div class="a" style="left:231px;top:336px;width:20px;height:76px;background:#c0c0c0"></div>
<div class="a" style="left:231px;top:431px;width:20px;height:19px;background:#c0c0c0"></div>
<div class="a" style="left:231px;top:469px;width:20px;height:19px;background:#c0c0c0"></div>
<div class="a" style="left:231px;top:507px;width:20px;height:38px;background:#c0c0c0"></div>
<div class="a" style="left:231px;top:203px;width:598px;height:358px;overflow:hidden">
<span class="t mono ln" style="left:47px;top:4px">54</span>
<span class="t mono code" style="left:83.5px;top:4px"> <span class="cm">* @brief Main function</span></span>
<span class="t mono ln" style="left:47px;top:23px">55</span>
<span class="t mono code" style="left:83.5px;top:23px"> <span class="cm">*/</span></span>
<span class="t mono ln" style="left:47px;top:42px">56</span>
<span class="t mono code" style="left:83.5px;top:42px"><span class="kw">int</span> main(<span class="kw">void</span>)</span>
<span class="t mono ln" style="left:47px;top:61px">57</span>
<span class="t mono code" style="left:83.5px;top:61px">{</span>
<span class="t mono ln" style="left:47px;top:80px">58</span>
<span class="t mono code" style="left:83.5px;top:80px">    <span class="kw">char</span> ch;</span>
<span class="t mono ln" style="left:47px;top:99px">59</span>
<span class="t mono ln" style="left:47px;top:118px">60</span>
<span class="t mono code" style="left:83.5px;top:118px">    <span class="cm">/* Init board hardware. */</span></span>
<span class="t mono ln" style="left:47px;top:137px">61</span>
<span class="t mono code" style="left:83.5px;top:137px">    BOARD_ConfigMPU();</span>
<span class="t mono ln" style="left:47px;top:156px">62</span>
<span class="t mono code" style="left:83.5px;top:156px">    BOARD_InitPins();</span>
<span class="t mono ln" style="left:47px;top:175px">63</span>
<span class="t mono code" style="left:83.5px;top:175px">    BOARD_BootClockRUN();</span>
<span class="t mono ln" style="left:47px;top:194px">64</span>
<span class="t mono code" style="left:83.5px;top:194px">    BOARD_InitDebugConsole();</span>
<span class="t mono ln" style="left:47px;top:213px">65</span>
<span class="t mono ln" style="left:47px;top:232px">66</span>
<span class="t mono code" style="left:83.5px;top:232px">    PRINTF(<span class="st">"hello world.\r\n"</span>);</span>
<span class="t mono ln" style="left:47px;top:251px">67</span>
<span class="t mono ln" style="left:47px;top:270px">68</span>
<span class="t mono code" style="left:83.5px;top:270px">    <span class="kw">while</span> (<span class="nm">1</span>)</span>
<span class="t mono ln" style="left:47px;top:289px">69</span>
<span class="t mono code" style="left:83.5px;top:289px">    {</span>
<span class="t mono ln" style="left:47px;top:308px">70</span>
<span class="t mono code" style="left:83.5px;top:308px">        ch = GETCHAR();</span>
<span class="t mono ln" style="left:47px;top:327px">71</span>
<span class="t mono code" style="left:83.5px;top:327px">        PUTCHAR(ch);</span>
<span class="t mono ln" style="left:47px;top:346px">72</span>
<span class="t mono code" style="left:83.5px;top:346px">    }</span>
<svg class="a" style="left:0;top:0" width="90" height="358"><g stroke="#808080" stroke-width="1" fill="none"><path d="M75.39999999999998 0V28.5H80.89999999999998"/><path d="M75.39999999999998 72V289.5"/><path d="M75.39999999999998 299.5V358"/><path d="M75.39999999999998 351.5H80.89999999999998"/><rect x="70.39999999999998" y="62.5" width="10" height="10" fill="#fff"/><path d="M72.39999999999998 67.5H78.39999999999998"/><rect x="70.39999999999998" y="289.5" width="10" height="10" fill="#fff"/><path d="M72.39999999999998 294.5H78.39999999999998"/></g></svg>
</div>
<svg class="a" style="left:232px;top:336px" width="19" height="17"><path d="M1.5 1.5V15.5L8.6 8.5Z" fill="#55f4ff" stroke="#000" stroke-width="1"/><path d="M9.4 1.5V15.5L16.8 8.5Z" fill="#ffff00" stroke="#000" stroke-width="1"/></svg>
<div class="a sb" style="left:829px;top:203px;width:18px;height:358px"></div>
<div class="a thumb" style="left:829px;top:452px;width:15px;height:79px"></div>
<div class="a sb" style="left:231px;top:561px;width:616px;height:17px"></div>
<div class="a thumb" style="left:248px;top:561px;width:144px;height:17px"></div>
<svg class="a" style="left:830.5px;top:206px" width="12" height="12" viewBox="-6 -6 12 12"><path d="M-3.6 2L0 -1.8L3.6 2" fill="none" stroke="#525252" stroke-width="2"/></svg><svg class="a" style="left:830.5px;top:547px" width="12" height="12" viewBox="-6 -6 12 12"><path d="M-3.6 -2L0 1.8L3.6 -2" fill="none" stroke="#525252" stroke-width="2"/></svg><svg class="a" style="left:232.6px;top:563.5px" width="12" height="12" viewBox="-6 -6 12 12"><path d="M2 -3.6L-1.8 0L2 3.6" fill="none" stroke="#525252" stroke-width="2"/></svg><svg class="a" style="left:813.5px;top:563.5px" width="12" height="12" viewBox="-6 -6 12 12"><path d="M-2 -3.6L1.8 0L-2 3.6" fill="none" stroke="#525252" stroke-width="2"/></svg>
<div class="a" style="left:229px;top:578px;width:618px;height:1px;background:#fcfcfc"></div>
</body></html>
